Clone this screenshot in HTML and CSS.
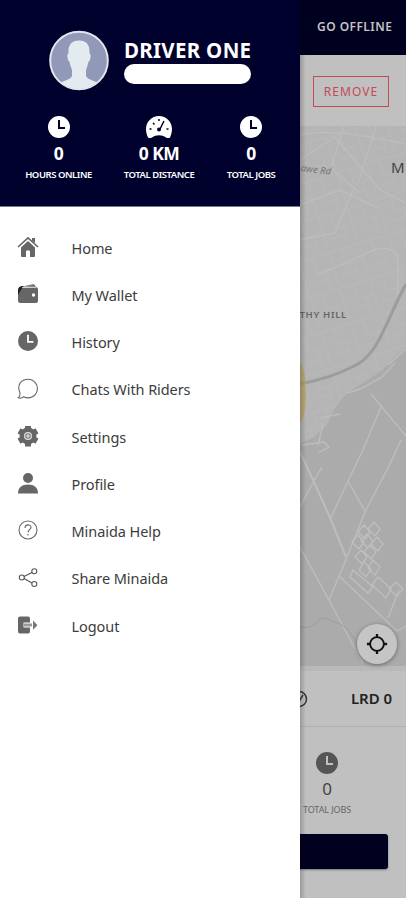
FILE: index.html
```html
<!DOCTYPE html>
<html lang="en">
<head>
<meta charset="utf-8">
<title>Driver menu</title>
<link rel="stylesheet" href="styles.css">
</head>
<body>
<svg width="0" height="0" class="defs">
  <symbol id="clock" viewBox="0 0 22 22"><path fill="currentColor" fill-rule="evenodd" d="M11 0a11 11 0 1 0 0 22a11 11 0 1 0 0-22zM10 4h2v7h5v2h-7z"/></symbol>
</svg>
<div class="screen">
  <aside class="drawer">
    <header class="profile">
      <div class="identity">
        <svg class="avatar" viewBox="0 0 60 60">
          <defs><clipPath id="face"><circle cx="30" cy="30" r="28.5"/></clipPath></defs>
          <circle cx="30" cy="30" r="28.8" fill="#9298b8"/>
          <path clip-path="url(#face)" fill="#e3ebf0" d="M30 10c-8 0-11 5-10.500 13c-1 0-1.500 2-.8 5c.4 2 1 3 1.800 3c.6 4 2 6.500 2.500 8.500v6c-1 4-11 4.500-14 9.500v6h42v-6c-3-5-13-5.500-14-9.500v-6c.5-2 1.900-4.500 2.500-8.500c.8 0 1.400-1 1.800-3c.7-3 .2-5-.8-5c.5-8-2.500-13-10.500-13z"/>
          <circle cx="30" cy="30" r="28.800" fill="none" stroke="#dfe6ed" stroke-width="2"/>
        </svg>
        <div class="name-block">
          <div class="name">DRIVER ONE</div>
          <div class="pill"></div>
        </div>
      </div>
      <div class="stats">
        <div class="stat hours"><svg class="stat-icon"><use href="#clock"/></svg><b>0</b><span>HOURS ONLINE</span></div>
        <div class="stat distance">
          <svg class="stat-icon gauge" viewBox="0 0 26 22"><path fill="#fff" d="M13 0C5.500 0 0 6 0 13c0 3 .8 6 2 8.500q1.500 1 4 0c4-3 10-3 14 0q2.500 1 4 0c1.200-2.500 2-5.500 2-8.500C26 6 20.500 0 13 0z"/><path stroke="#00002d" stroke-width="1.500" d="M13 3v2M7 7l1.500 1.500M3.500 13h2M20.500 13h2M18 5l-4 8"/><circle cx="13" cy="13.500" r="2" fill="#00002d"/></svg>
          <b>0 KM</b><span>TOTAL DISTANCE</span></div>
        <div class="stat jobs"><svg class="stat-icon"><use href="#clock"/></svg><b>0</b><span>TOTAL JOBS</span></div>
      </div>
    </header>
    <nav class="menu">
      <a><svg viewBox="0 0 22 22"><path fill="#666" d="M4 10.500l7-6.500l7 6.500V19q0 1-1 1h-4v-6q-2-1.500-4 0v6H5q-1 0-1-1z"/><path fill="none" stroke="#666" stroke-width="1.600" d="M1 10L11 .8L21 10"/><path fill="#666" d="M15 1h3v5l-3-2.500z"/></svg><span>Home</span></a>
      <a><svg viewBox="0 0 22 22"><rect x="1" y="3" width="20" height="16" rx="2.500" fill="#666"/><path fill="#222" d="M1 8q0-6 4-6h2L4 6l-3 5z"/><path fill="#777" d="M5 2.500l12-2.500l2 3z"/><path stroke="#fff" stroke-width=".7" d="M5 3.500h14"/><circle cx="16.500" cy="11" r="1.700" fill="#fff"/></svg><span>My Wallet</span></a>
      <a><svg class="history" viewBox="0 0 22 22"><use href="#clock"/></svg><span>History</span></a>
      <a><svg viewBox="0 0 22 22"><path fill="none" stroke="#666" stroke-width="1.100" d="M3 15C-.5 7 4 1.200 11.200 1.200a9.300 9.300 0 1 1-4.500 17.500C5.500 19.800 3 20.300 1.200 19.800c1.500-1 2-2.500 1.800-4.800z"/></svg><span>Chats With Riders</span></a>
      <a><svg viewBox="0 0 22 22"><circle cx="11" cy="10" r="6" fill="none" stroke="#666" stroke-width="5"/><path stroke="#666" stroke-width="6" stroke-linejoin="round" d="M11 -.5v5M11 15.500v5M2 4.800l3 1.700M17 13.500l3 1.700M2 15.200l3-1.700M17 6.500l3-1.700"/><circle cx="11" cy="10" r="3.400" fill="#777" stroke="#ddd" stroke-width="1.200"/><path stroke="#eee" stroke-width="1" d="M11 8v4M9 10h4"/></svg><span>Settings</span></a>
      <a><svg viewBox="0 0 22 22"><circle cx="11" cy="5" r="5" fill="#666"/><path fill="#666" d="M1 20.500c0-6 4-9 10-9s10 3 10 9z"/></svg><span>Profile</span></a>
      <a><svg viewBox="0 0 22 22"><g fill="none" stroke="#666" stroke-width="1.100"><circle cx="11" cy="10" r="9"/><path d="M8 8c0-4 6-4 6-.8c0 2.500-3 2.500-3 5.300M11 14v1.500"/></g></svg><span>Minaida Help</span></a>
      <a><svg viewBox="0 0 22 22"><g fill="none" stroke="#555" stroke-width="1.100"><path d="M7 9.500l8-4M7 11.500l8 4.500"/><circle cx="4.800" cy="10.500" r="2.500"/><circle cx="17.300" cy="4.200" r="2.500"/><circle cx="17.300" cy="17" r="2.500"/></g></svg><span>Share Minaida</span></a>
      <a><svg viewBox="0 0 22 22"><path fill="#666" d="M3 1.500h8q2 0 2 2v4H6.500v5H13v4q0 2-2 2H3q-2 0-2-2v-13q0-2 2-2z"/><path fill="#999" d="M7 8.500h8v3H7z"/><path fill="#777" d="M16 5.500l4.500 4.700l-4.500 4.600z"/></svg><span>Logout</span></a>
    </nav>
  </aside>
  <main class="backdrop">
    <div class="topbar">GO OFFLINE</div>
    <div class="action"><div class="remove">REMOVE</div></div>
    <div class="map">
      <svg viewBox="300 126 106 540" width="106" height="540">
        <defs>
          <pattern id="streets" width="31" height="37" patternUnits="userSpaceOnUse" patternTransform="rotate(-17)"><path d="M0 5h31M6 5v16h18M15 21v16M24 5v32M0 30h15" fill="none" stroke="#bababa" stroke-width="1"/></pattern>
        </defs>
        <path fill="#b5b5b5" d="M300 126h106v540H300z"/>
        <path fill="url(#streets)" d="M300 126h106v540H300z"/>
        <path fill="#ababab" d="M406 347l-12 11-12 12-14 10-20 12-10 12-6 10-6 12-13 12-13 5v223h106z"/>
        <g fill="none" stroke="#bdbdbd" stroke-width="1.400">
          <path d="M300 135q30-8 106 9M300 160l35-23 45 53 26 13M318 275l58-26q20-3 22 10v35M344 126l-13 42 28 24M300 205l40-15 38 18M300 240l35-7 19-45M376 126l-17 55"/>
          <path d="M406 349l-18 16M347 393l13-4 22-12 13-14M320 418l20-4M323 424l-5 22M302 445l22-3 5 5-11 6"/>
          <path stroke-width="2" d="M300 452l14 30 17 38 15 37"/>
          <path d="M371 394l35 42M381 407l-18 43-15 31-18 39M348 481l17 30M401 440l-12 26-24 46-20 50-16 38M300 507l15-28 7-12M300 547l29 53 24 45 10 18M340 577l57 54 9-5M388 618l11-28"/>
        </g>
        <g fill="none" stroke="#bebebe" stroke-width="1.300">
          <path d="M374 522l6 7-5 7-7-7zM364 525l6 7-5 7-7-7zM367 534l6 7-5 7-7-7zM377 537l6 7-5 7-7-7zM358 535l6 7-5 7-7-7zM370 545l6 7-5 7-7-7zM361 550l6 7-5 7-7-7zM373 560l7 7-5 8-7-7zM364 562l7 7-5 8-7-7z"/>
          <path d="M353 570l20 17-5 6-18-16zM378 577l13 12-5 9-14-13zM396 582l7 7-6 7-8-7z"/>
        </g>
        <path fill="none" stroke="#9c9c9c" stroke-width="3" d="M300 384c20-4 35-8 52-17c27-11 32-43 54-83"/>
        <path fill="none" stroke="#9d9d9d" d="M300 627c9 1 12 0 17-5c6-7 11-3 17 0c13 3 17 12 22 20"/>
        <ellipse cx="299" cy="393" rx="7" ry="30" fill="#bba258" opacity=".65"/>
        <text x="300.500" y="171" transform="rotate(7 300 171)" class="road">awe Rd</text>
        <text x="391" y="173" class="city">M</text>
        <text x="299.500" y="318" class="hill">THY HILL</text>
      </svg>
      <div class="locate"><svg viewBox="0 0 24 24"><circle cx="12" cy="12" r="7.500" fill="none" stroke="#111" stroke-width="2"/><path stroke="#111" stroke-width="2.500" d="M12 1v4M12 19v4M1 12h4M19 12h4"/></svg></div>
    </div>
    <section class="sheet">
      <div class="balance"><svg viewBox="0 0 18 18"><circle cx="9" cy="9" r="7.500" fill="none" stroke="#333" stroke-width="1.500"/><path stroke="#333" stroke-width="1.500" d="M8 13l5-8"/></svg><b>LRD 0</b></div>
      <div class="summary"><svg><use href="#clock"/></svg><strong>0</strong><span>TOTAL JOBS</span></div>
      <div class="cta"></div>
    </section>
  </main>
</div>
</body>
</html>
```
FILE: styles.css
```css
* { box-sizing: border-box; }
body { margin: 0; background: #fff; font-family: "Noto Sans", "Open Sans", sans-serif; overflow: hidden; }
.defs { position: absolute; }
.screen { display: flex; width: 406px; height: 898px; }
.drawer { width: 300px; height: 900px; background: #fff; flex: none; }
.profile { height: 207px; background: #00002d; color: #fff; border-bottom: 1px solid #77778a; padding-top: 30px; }
.identity { display: flex; gap: 15px; padding-left: 49px; }
.avatar { width: 60px; height: 61px; }
.name-block { width: 127px; padding-top: 6px; }
.name { font-size: 20.500px; font-weight: 700; line-height: 29px; height: 28px; white-space: nowrap; letter-spacing: .3px; }
.pill { height: 20px; border-radius: 10px; background: #fff; }
.stats { display: flex; justify-content: space-between; padding: 25px 24px 0 25px; }
.stat { display: flex; flex-direction: column; align-items: center; white-space: nowrap; }
.hours { width: 67px; }
.distance { width: 72px; }
.jobs { width: 50px; }
.stat-icon { width: 22px; height: 22px; color: #fff; }
.gauge { width: 26px; }
.stat b { font-size: 17.500px; font-weight: 700; line-height: 24px; margin-top: 3px; letter-spacing: -.6px; }
.stat span { font-size: 9.500px; font-weight: 600; line-height: 14px; margin-top: 3px; letter-spacing: -.45px; }
.menu { padding-top: 17px; }
.menu a { display: flex; align-items: center; height: 47.250px; padding-left: 17px; gap: 32.500px; }
.menu svg { width: 22px; height: 22px; color: #666; }
.menu svg.history { padding: 1px; margin-top: -2px; }
.menu span { font-size: 14.500px; color: #3c3c3c; letter-spacing: -.07px; }
.backdrop { width: 106px; background: #c0c0c0; overflow: hidden; position: relative; }
.backdrop::after { content: ""; position: absolute; left: 0; top: 55px; bottom: 0; width: 6px; background: linear-gradient(90deg, rgba(0,0,0,.2), rgba(0,0,0,0)); }
.topbar { height: 55px; background: #00001f; color: #c4c4c4; font-size: 12px; font-weight: 600; line-height: 54px; padding-left: 17px; letter-spacing: .45px; white-space: nowrap; }
.action { height: 71px; padding: 21px 17px 0 13px; }
.remove { height: 31px; border: 1.500px solid #c44a54; color: #c44a54; font-size: 12px; line-height: 29px; text-align: center; letter-spacing: 1.100px; }
.map { height: 540px; position: relative; }
.map > svg { display: block; }
.road { font-size: 9.500px; font-style: italic; fill: #777; }
.city { font-size: 15px; fill: #444; }
.hill { font-size: 9.500px; font-weight: 600; fill: #666; letter-spacing: .7px; }
.locate { position: absolute; left: 57px; top: 498px; width: 40px; height: 40px; border-radius: 50%; background: #c5c5c5; box-shadow: 0 1px 4px #666; display: grid; place-items: center; }
.locate svg { width: 22px; height: 22px; }
.sheet { height: 232px; background: #c0c0c0; border-top: 5px solid #b9b9b9; }
.balance { height: 56px; border-bottom: 1px solid #b1b1b1; display: flex; align-items: center; justify-content: space-between; padding-right: 14px; }
.balance svg { width: 18px; height: 18px; margin-left: -10px; }
.balance b { font-size: 15px; font-weight: 600; color: #222; letter-spacing: -.05px; padding-bottom: 2px; }
.summary { display: flex; flex-direction: column; align-items: center; width: 54px; padding-top: 25px; white-space: nowrap; }
.summary svg { width: 22px; height: 22px; color: #555; }
.summary strong { font-size: 17px; font-weight: 400; line-height: 24px; margin-top: 3px; color: #444; }
.summary span { font-size: 9px; line-height: 14px; color: #666; margin-top: 2px; letter-spacing: -.1px; }
.cta { width: 88px; height: 35px; margin-top: 17px; background: #00001f; border-radius: 0 3px 3px 0; box-shadow: 0 1px 2px #777; }
```
